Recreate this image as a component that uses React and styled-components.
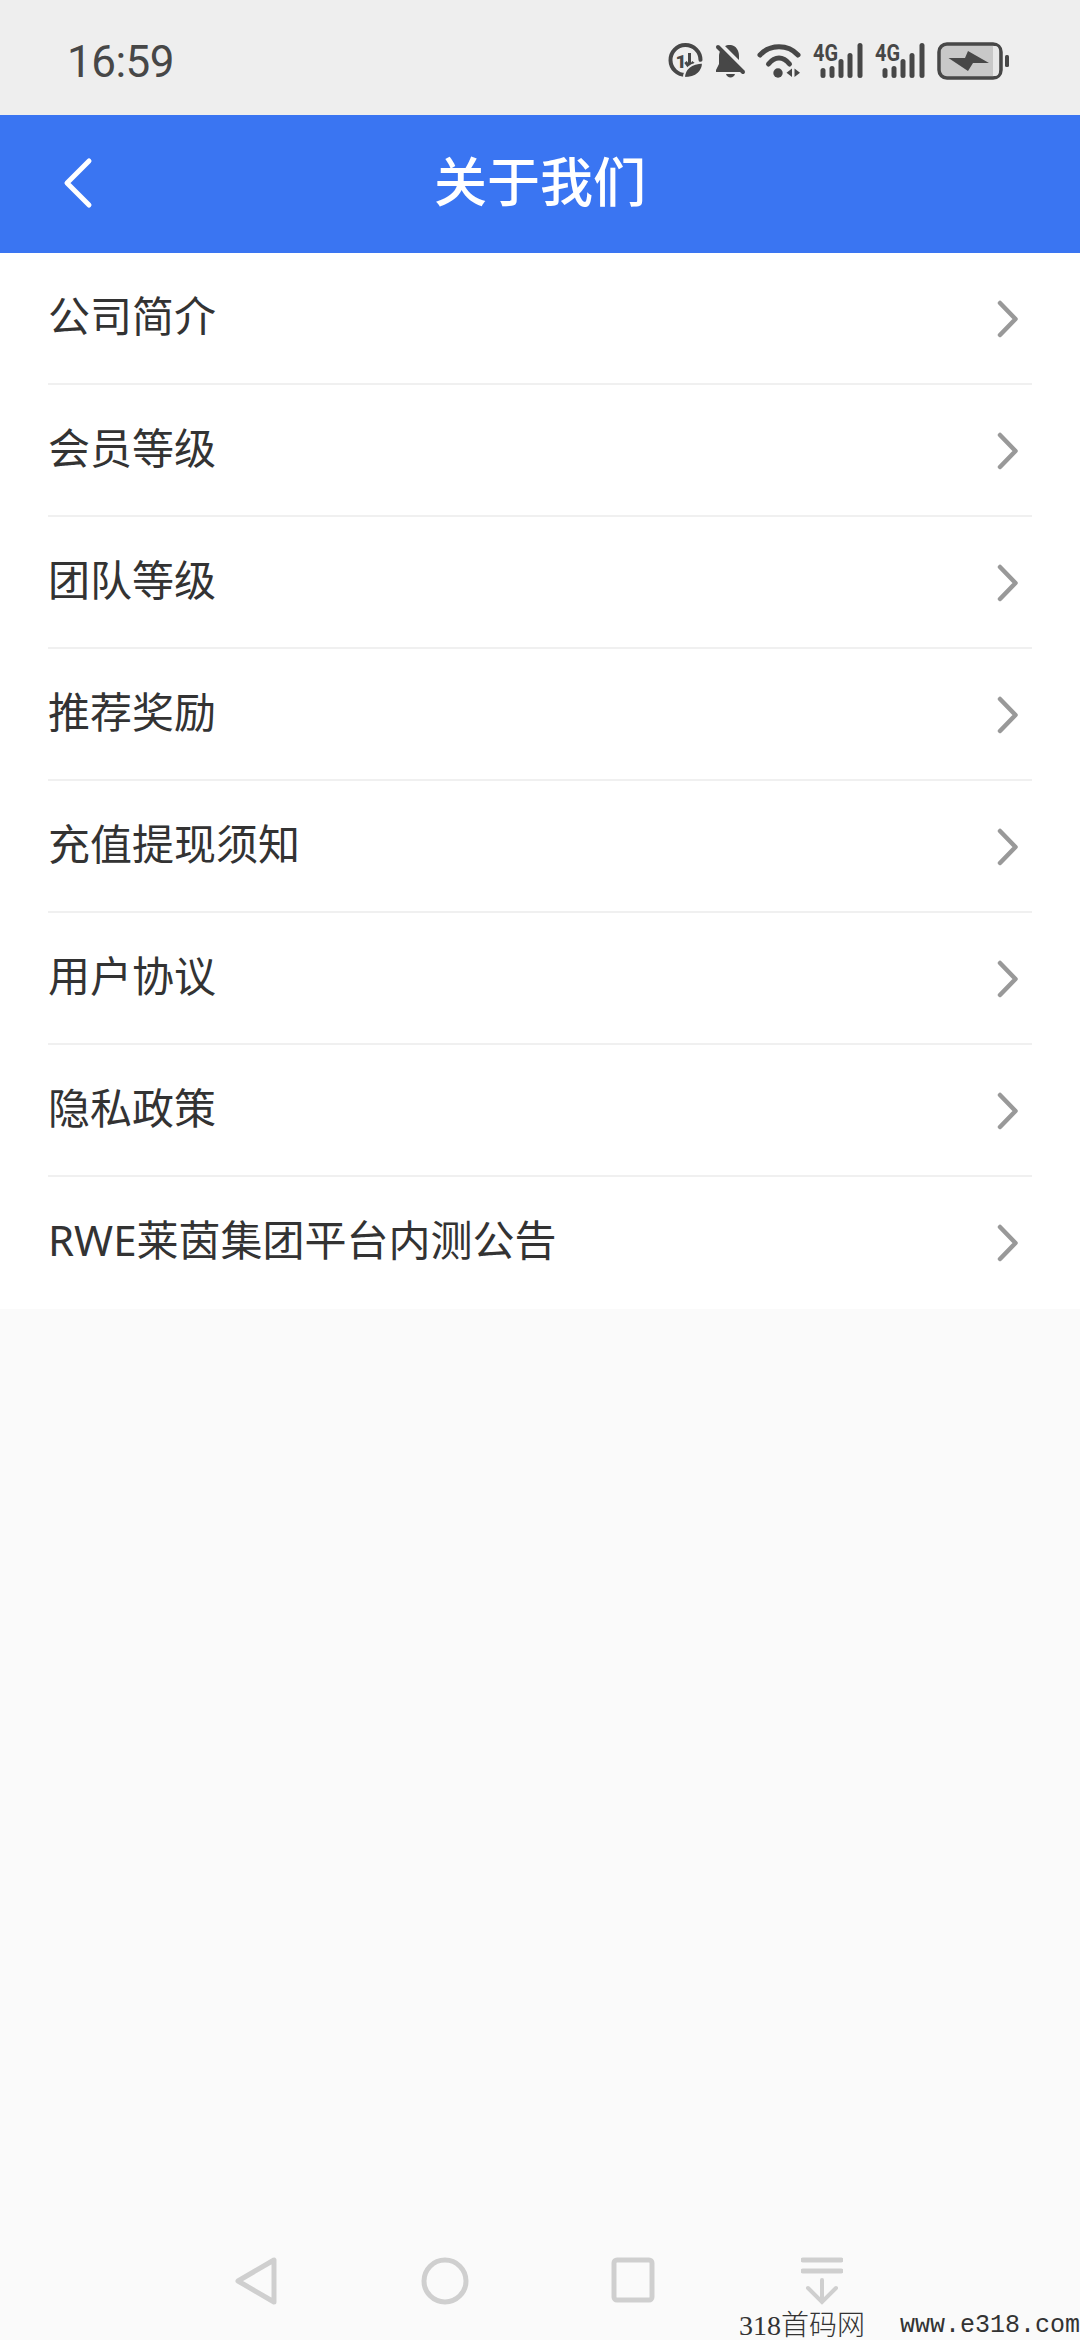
import React from "react";
import styled, { createGlobalStyle } from "styled-components";

const menuItems = [
  "公司简介",
  "会员等级",
  "团队等级",
  "推荐奖励",
  "充值提现须知",
  "用户协议",
  "隐私政策",
  "RWE莱茵集团平台内测公告",
];

const GlobalStyle = createGlobalStyle`
  html, body {
    margin: 0;
    padding: 0;
    background: #fafafa;
  }
  * {
    box-sizing: border-box;
  }
`;

const Page = styled.div`
  position: relative;
  width: 1080px;
  height: 2340px;
  overflow: hidden;
  display: flex;
  flex-direction: column;
  background: #fafafa;
  font-family: "Noto Sans", "Noto Sans CJK SC", sans-serif;
`;

const StatusBar = styled.div`
  height: 115px;
  flex-shrink: 0;
  display: flex;
  align-items: center;
  justify-content: space-between;
  padding: 6px 71px 0 67px;
  background: #eeeeee;
  color: #474747;
`;

const Time = styled.span`
  font-family: Roboto, sans-serif;
  font-size: 44px;
  line-height: 1;
  letter-spacing: -0.5px;
  margin-top: 2px;
`;

const StatusIcons = styled.div`
  display: flex;
  align-items: center;
  gap: 12px;
  svg {
    display: block;
    overflow: visible;
  }
`;

const Header = styled.header`
  position: relative;
  height: 138px;
  flex-shrink: 0;
  display: flex;
  align-items: center;
  justify-content: center;
  background: #3a75f2;
  color: #fff;
`;

const BackButton = styled.button`
  position: absolute;
  left: 60px;
  top: 42px;
  padding: 0;
  border: 0;
  background: none;
  color: inherit;
  line-height: 0;
`;

const Title = styled.h1`
  margin: -6px 0 0 0;
  font-size: 53px;
  font-weight: 500;
  line-height: 1;
`;

const Menu = styled.ul`
  margin: 0;
  padding: 0 48px;
  list-style: none;
  background: #fff;
`;

const MenuRow = styled.li`
  height: 132px;
  display: flex;
  align-items: center;
  justify-content: space-between;
  padding: 0 14px 0 0;
  border-bottom: 2px solid ${(props) => (props.$last ? "transparent" : "#f0f0f0")};
`;

const MenuLabel = styled.span`
  font-size: 42px;
  line-height: 1;
  color: #333;
  margin-top: -5px;
`;

const ChevronMark = styled.svg`
  display: block;
  margin-top: 2px;
`;

const Spacer = styled.div`
  flex: 1;
`;

const NavBar = styled.nav`
  height: 105px;
  flex-shrink: 0;
  display: grid;
  grid-template-columns: repeat(4, 188.5px);
  justify-items: center;
  align-items: start;
  padding: 22px 0 0 162px;
  color: #cfcfcf;
  svg {
    display: block;
  }
`;

const Watermark = styled.div`
  position: absolute;
  left: 739px;
  bottom: 0;
  display: flex;
  color: #333;
  line-height: 1;
  white-space: nowrap;
`;

const WatermarkName = styled.span`
  width: 161px;
  font-family: "Liberation Serif", "Noto Sans CJK SC", serif;
  font-size: 28px;
  font-weight: 300;
`;

const WatermarkSite = styled.span`
  font-family: "Liberation Mono", monospace;
  font-size: 25px;
  margin-top: 1px;
`;

const SaverIcon = () => (
  <svg width="34" height="36" viewBox="0 0 34 36">
    <path d="M31.5 17A15 15 0 1 0 17 32" fill="none" stroke="currentColor" strokeWidth="4" strokeLinecap="round" />
    <text x="6.5" y="25" fontFamily="Roboto, sans-serif" fontSize="19" fontWeight="900" fill="currentColor">1</text>
    <path d="M20.5 10v14M16.5 19l4 5.5 4-5.500" fill="none" stroke="currentColor" strokeWidth="3" />
    <path d="M15 35c0-9 7-15 19-15.500C34 28 28 35 15 35z" fill="currentColor" stroke="#eeeeee" strokeWidth="2" />
  </svg>
);

const MutedBell = () => (
  <svg width="30" height="36" viewBox="0 0 30 36">
    <path d="M13 2h3c5 1 8 5 8 11v7l4 7v2H1v-2l3-6v-8C4 8 8 3 13 2z" fill="currentColor" />
    <path d="M11 31h9c-1 4.500-8 4.500-9 0z" fill="currentColor" />
    <path d="M5 1l25 25" stroke="#eeeeee" strokeWidth="4" />
    <path d="M3 4l25 25" stroke="currentColor" strokeWidth="4" strokeLinecap="round" />
  </svg>
);

const WifiIcon = () => (
  <svg width="44" height="36" viewBox="0 0 44 36">
    <g fill="none" stroke="currentColor" strokeWidth="5" strokeLinecap="round">
      <path d="M3 12C13 1 31 1 41 12" />
      <path d="M11.5 21C18 13 26 13 32.5 21" />
    </g>
    <circle cx="21" cy="30" r="4.7" fill="currentColor" />
    <path d="M35 25.5v8.500l-5.500-4.200zM37.5 25.5v8.500l5.500-4.200z" fill="currentColor" />
  </svg>
);

const SignalIcon = () => (
  <svg width="50" height="36" viewBox="0 0 50 36">
    <text x="0" y="18" fontFamily="Roboto, sans-serif" fontSize="23" fontWeight="700" fill="currentColor" textLength="25" lengthAdjust="spacingAndGlyphs">4G</text>
    <g stroke="currentColor" strokeWidth="5" strokeLinecap="round">
      <path d="M10 27.5v5" />
      <path d="M19 25.5v7" />
      <path d="M28 18.5v14" />
      <path d="M37 12.5v20" />
      <path d="M47 2.5v30" />
    </g>
  </svg>
);

const BatteryIcon = () => (
  <svg width="72" height="38" viewBox="0 0 72 38">
    <rect x="2" y="2" width="62" height="34" rx="8" fill="#c8c8c8" stroke="currentColor" strokeWidth="3.5" />
    <path d="M56 4h2c2.500 0 4 2 4 4.500v21c0 2.500-1.500 4.500-4 4.500h-2z" fill="#e8e8e8" />
    <path d="M11.5 16H28l3-7 21 12H36l-5 8z" fill="currentColor" />
    <rect x="68" y="13" width="4" height="12" rx="1.5" fill="currentColor" />
  </svg>
);

const BackArrow = () => (
  <svg width="36" height="52" viewBox="0 0 36 52">
    <path d="M29 4 7 26l22 22" fill="none" stroke="currentColor" strokeWidth="5" strokeLinecap="round" strokeLinejoin="round" />
  </svg>
);

const Chevron = () => (
  <ChevronMark width="22" height="38" viewBox="0 0 22 38">
    <path d="M4 3l15.500 16L4 35" fill="none" stroke="#999" strokeWidth="4.5" strokeLinecap="round" strokeLinejoin="round" />
  </ChevronMark>
);

const NavBack = () => (
  <svg width="44" height="48" viewBox="0 0 44 48">
    <path d="M40 3v42L4 24z" fill="none" stroke="currentColor" strokeWidth="5" strokeLinejoin="round" />
  </svg>
);

const NavHome = () => (
  <svg width="48" height="48" viewBox="0 0 48 48">
    <circle cx="24" cy="24" r="21" fill="none" stroke="currentColor" strokeWidth="5" />
  </svg>
);

const NavRecent = () => (
  <svg width="44" height="46" viewBox="0 0 44 46">
    <rect x="3" y="3" width="38" height="40" rx="3" fill="none" stroke="currentColor" strokeWidth="5" />
  </svg>
);

const NavDrawer = () => (
  <svg width="42" height="48" viewBox="0 0 42 48">
    <g fill="none" stroke="currentColor" strokeLinecap="round">
      <path d="M2 3h38M2 14h38" strokeWidth="5" />
      <path d="M21 23v22M7 31l14 14 14-14" strokeWidth="4" />
    </g>
  </svg>
);

export default function App() {
  return (
    <Page>
      <GlobalStyle />
      <StatusBar>
        <Time>16:59</Time>
        <StatusIcons>
          <SaverIcon />
          <MutedBell />
          <WifiIcon />
          <SignalIcon />
          <SignalIcon />
          <BatteryIcon />
        </StatusIcons>
      </StatusBar>
      <Header>
        <BackButton>
          <BackArrow />
        </BackButton>
        <Title>关于我们</Title>
      </Header>
      <Menu>
        {menuItems.map((name, idx) => (
          <MenuRow key={name} $last={idx === menuItems.length - 1}>
            <MenuLabel>{name}</MenuLabel>
            <Chevron />
          </MenuRow>
        ))}
      </Menu>
      <Spacer />
      <NavBar>
        <NavBack />
        <NavHome />
        <NavRecent />
        <NavDrawer />
      </NavBar>
      <Watermark>
        <WatermarkName>318首码网</WatermarkName>
        <WatermarkSite>www.e318.com</WatermarkSite>
      </Watermark>
    </Page>
  );
}
